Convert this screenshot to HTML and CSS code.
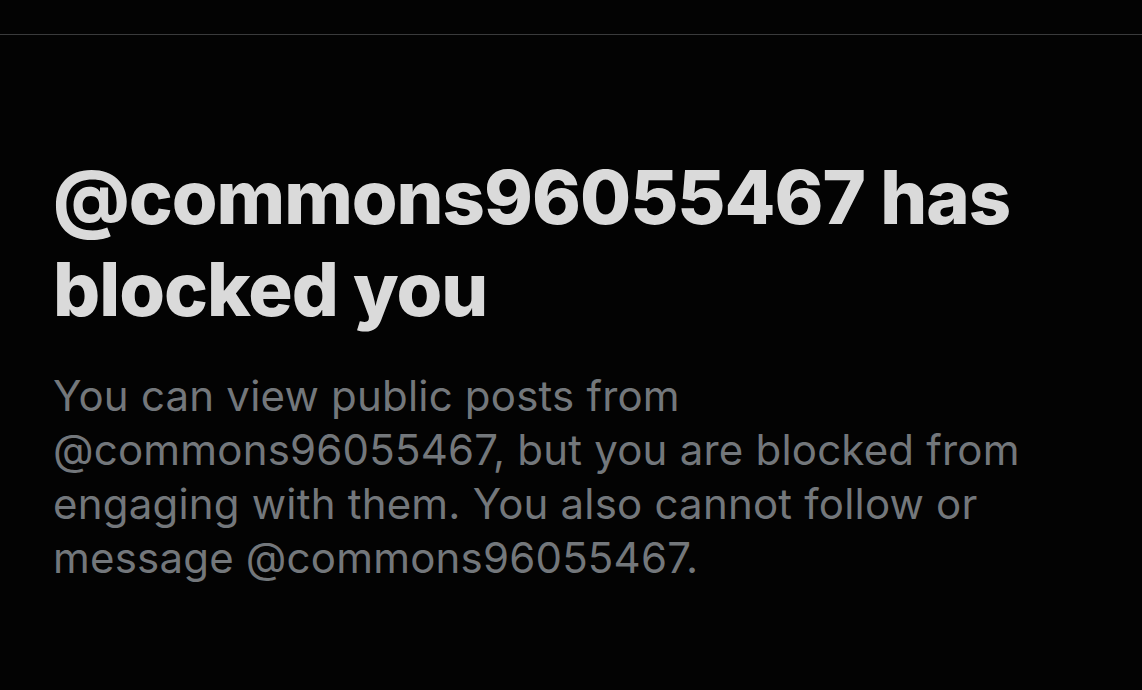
FILE: index.html
```html
<!DOCTYPE html>
<html lang="en">
<head>
    <meta charset="UTF-8">
    <meta name="viewport" content="width=device-width, initial-scale=1.0">
    <title>Blocked</title>
    <link rel="stylesheet" href="styles.css">
</head>
<body>
    <div class="top-bar"></div>

    <div class="blocked">
        <h1 class="blocked-title">@commons96055467 has blocked you</h1>
        <p class="blocked-text">You can view public posts from @commons96055467, but you are blocked from engaging with them. You also cannot follow or message @commons96055467.</p>
    </div>
</body>
</html>
```

FILE: styles.css
```css
* {
    margin: 0;
    padding: 0;
    box-sizing: border-box;
}

body {
    font-family: Inter, 'Liberation Sans', sans-serif;
    background: #030303;
    min-height: 100vh;
}

.top-bar {
    height: 35px;
    border-bottom: 1px solid #3a3b3c;
}

.blocked {
    padding: 116px 52px 0 53px;
    max-width: 1090px;
}

.blocked-title {
    color: #dadada;
    font-size: 74px;
    font-weight: 800;
    line-height: 92px;
    letter-spacing: -1px;
    margin-bottom: 34px;
}

.blocked-text {
    color: #73777b;
    font-size: 42px;
    font-weight: 400;
    line-height: 54px;
    letter-spacing: 0.2px;
}
```
